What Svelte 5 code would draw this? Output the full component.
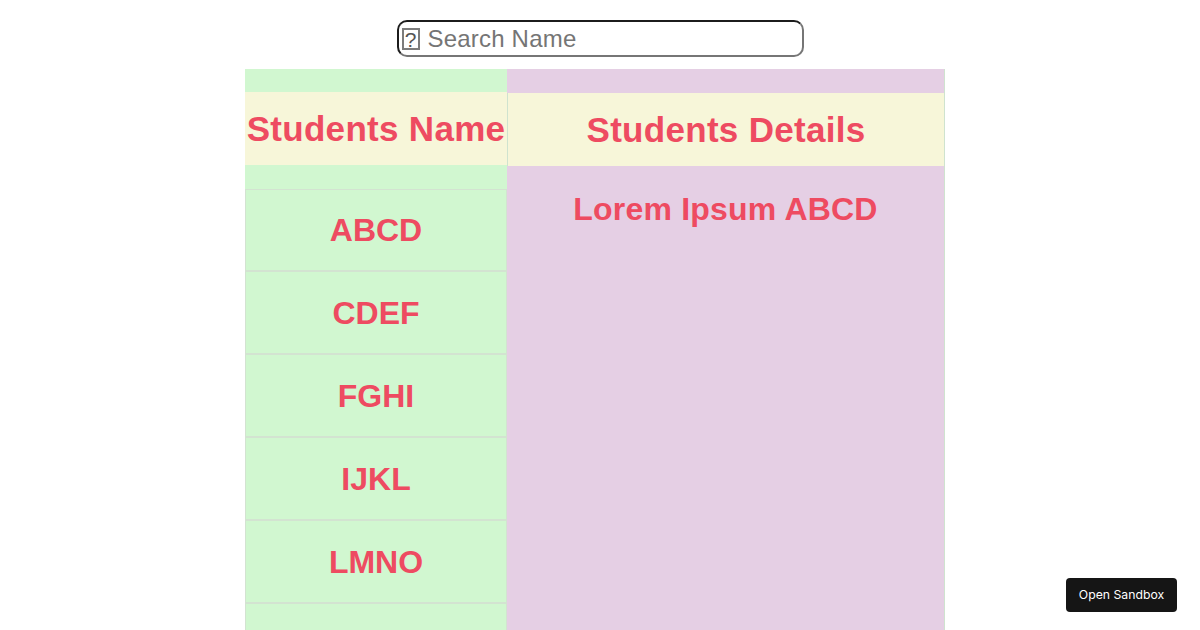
<script>
  const students = ['ABCD', 'CDEF', 'FGHI', 'IJKL', 'LMNO'];
  let query = $state('');
</script>

<div class="page">
  <div class="search-row">
    <label class="search-box">
      <span class="missing-glyph" aria-hidden="true">?</span>
      <input class="search" type="text" placeholder="Search Name" bind:value={query} />
    </label>
  </div>

  <div class="panel">
    <section class="names">
      <h2 class="title">Students Name</h2>
      <ul class="list">
        {#each students as name}
          <li class="item">{name}</li>
        {/each}
        <li class="item"></li>
      </ul>
    </section>
    <section class="details">
      <h2 class="title">Students Details</h2>
      <p class="info">Lorem Ipsum ABCD</p>
    </section>
  </div>

  <button type="button" class="sandbox">Open Sandbox</button>
</div>

<style>
  :global(body) {
    margin: 0;
    background: #fff;
    font-family: "Liberation Sans", Arial, sans-serif;
  }

  .page {
    height: 630px;
    overflow: hidden;
  }

  .search-row {
    display: flex;
    justify-content: center;
    padding-top: 20px;
    height: 49px;
  }

  .search-box {
    position: relative;
    display: block;
    width: 407px;
    height: 37px;
  }

  /* the emoji has no font in the original, so it shows as a boxed ? */
  .missing-glyph {
    position: absolute;
    left: 5px;
    top: 8px;
    box-sizing: border-box;
    width: 18px;
    height: 22px;
    border: 2px solid #7c7c7c;
    color: #555;
    font-size: 21px;
    line-height: 19px;
    text-align: center;
  }

  .search {
    box-sizing: border-box;
    display: block;
    width: 100%;
    height: 100%;
    padding: 1px 2px 1px 29px;
    border-width: 2px;
    border-style: solid;
    border-color: #1c1c1c #767676 #767676 #1c1c1c;
    border-radius: 10px;
    background: #fff;
    font-family: "Liberation Sans", Arial, sans-serif;
    font-size: 24px;
    letter-spacing: 0.2px;
    outline: none;
  }
  .search::placeholder { color: #757575; }

  .panel {
    display: flex;
    width: 700px;
    margin-left: 245px;
    height: 561px;
  }

  .names {
    box-sizing: border-box;
    width: 262px;
    padding-top: 23px;
    background: #d1f7d0;
  }

  .details {
    box-sizing: border-box;
    flex: 1;
    padding-top: 24px;
    background: #e5cfe4;
    border-right: 1px solid #cfe3cf;
  }

  .title {
    margin: 0;
    height: 73px;
    line-height: 73px;
    background: #f7f6d9;
    color: #ee4b61;
    font-size: 35px;
    font-weight: 700;
    letter-spacing: 0.3px;
    text-align: center;
    white-space: nowrap;
  }

  .details .title {
    border-left: 1px solid #cfe3cf;
  }

  .list {
    list-style: none;
    margin: 24px 0 0;
    padding: 0;
  }

  .item {
    box-sizing: border-box;
    height: 83px;
    line-height: 82px;
    border: 1px solid #d3e3d1;
    color: #ee4b61;
    font-size: 32px;
    font-weight: 700;
    text-align: center;
  }
  .item:first-child {
    height: 82px;
    line-height: 80px;
  }

  .info {
    margin: 25px 0 0;
    color: #ee4b61;
    font-size: 32px;
    font-weight: 700;
    letter-spacing: 0.2px;
    line-height: 37px;
    text-align: center;
  }

  .sandbox {
    position: fixed;
    right: 23px;
    bottom: 18px;
    width: 111px;
    height: 34px;
    padding: 0 0 2px;
    border: 0;
    border-radius: 4px;
    background: #151515;
    color: #fff;
    font-family: Inter, "Liberation Sans", sans-serif;
    font-size: 12.25px;
    cursor: pointer;
  }
</style>
